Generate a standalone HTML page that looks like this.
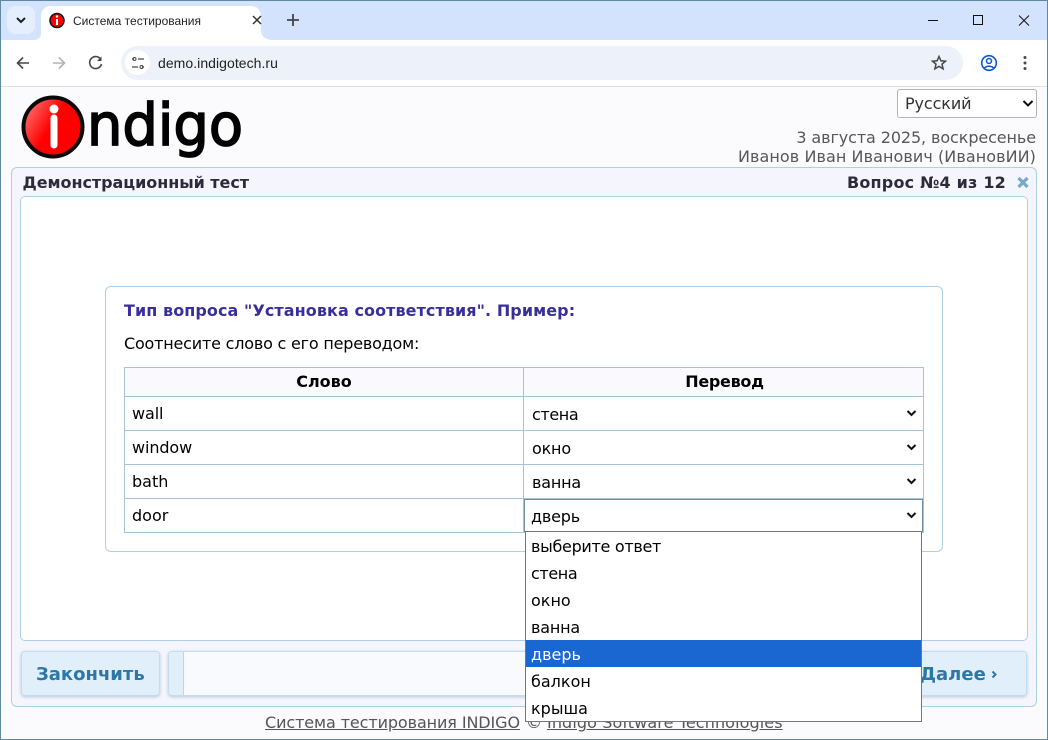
<!DOCTYPE html>
<html lang="ru"><head><meta charset="utf-8"><title>Система тестирования</title>
<style>
html,body{margin:0;padding:0;width:1048px;height:740px;overflow:hidden;background:#fbfbfe}
body{position:relative;font-family:"DejaVu Sans","Liberation Sans",sans-serif;font-size:16px;color:#000}
.a{position:absolute;white-space:nowrap}
.b{box-sizing:border-box}
.ch{font-family:"Liberation Sans",sans-serif}
svg{position:absolute;overflow:visible}
.cell{position:absolute;font-size:16px;line-height:20px;white-space:nowrap}
.opt{position:absolute;left:5px;font-size:16px;line-height:27px;height:27px}
</style></head><body>
<!-- browser chrome -->
<div class="a b" style="left:0;top:0;width:1048px;height:40px;background:#d3e3fd"></div>
<div class="a b" style="left:0;top:40px;width:1048px;height:47px;background:#fff;border-bottom:1px solid #e3e1de"></div>
<div class="a" style="left:7px;top:6px;width:28px;height:28px;background:#e5eefd;border-radius:8px"></div>
<svg style="left:0;top:0" width="1048" height="90" fill="none">
<path d="M17 18l4 4 4-4" stroke="#1f1f1f" stroke-width="2"/>
<path d="M33 40c6 0 8-3 8-8V16c0-6 4-10 10-10h200c6 0 10 4 10 10v14c0 6 4 10 12 10z" fill="#fff"/>
<circle cx="57" cy="20.500" r="7" fill="#f00" stroke="#111" stroke-width="1.500"/>
<path d="M57 19v6" stroke="#fff" stroke-width="2"/><circle cx="57" cy="16.500" r="1.200" fill="#fff"/>
<path d="M253 16l8 8M261 16l-8 8" stroke="#333" stroke-width="1.500"/>
<path d="M293 14v12M287 20h12" stroke="#444" stroke-width="1.800"/>
<path d="M928 20.500h10" stroke="#111" stroke-width="1"/>
<rect x="973.500" y="15.500" width="9" height="9" stroke="#111" stroke-width="1"/>
<path d="M1019 15.500l10 10M1029 15.500l-10 10" stroke="#111" stroke-width="1"/>
<path d="M29 63H18M23 57.500L17.500 63l5.500 5.500" stroke="#474747" stroke-width="1.600"/>
<path d="M53 63h11M59 57.500l5.500 5.500-5.500 5.500" stroke="#b3b3b3" stroke-width="1.600"/>
<path d="M100.500 59a6 6 0 1 0 1 5" stroke="#474747" stroke-width="1.600"/><path d="M101.500 56.500v4.500h-4.500z" fill="#474747"/>
</svg>
<div class="a b" style="left:121px;top:46px;width:842px;height:34px;border-radius:17px;background:#edf2fa"></div>
<div class="a" style="left:125px;top:50px;width:25px;height:25px;border-radius:50%;background:#fff"></div>
<svg style="left:0;top:0" width="1048" height="90" fill="none">
<path d="M132 59h2M138 59h6M132 67h6M142 67h2" stroke="#474747" stroke-width="1.300"/><circle cx="134.500" cy="59" r="1.500" stroke="#474747"/><circle cx="141.500" cy="67" r="1.500" stroke="#474747"/>
<path d="M939 56.500l1.900 4.300 4.600.4-3.500 3 1.100 4.600-4.100-2.400-4.100 2.400 1.100-4.600-3.500-3 4.600-.4z" stroke="#474747" stroke-width="1.500"/>
<circle cx="989" cy="63" r="7.300" stroke="#0b57d0" stroke-width="1.600"/><circle cx="989" cy="61" r="2.500" stroke="#0b57d0" stroke-width="1.500"/><path d="M984 68.500c2-3 8-3 10 0" stroke="#0b57d0" stroke-width="1.500"/>
<circle cx="1025" cy="57.500" r="1.500" fill="#474747"/><circle cx="1025" cy="63" r="1.500" fill="#474747"/><circle cx="1025" cy="68.500" r="1.500" fill="#474747"/>
</svg>
<div class="a ch" style="left:73px;top:14px;font-size:12px;line-height:15px;color:#1f1f1f">Система тестирования</div>
<div class="a ch" style="left:158px;top:55px;font-size:14px;line-height:16px;color:#1f1f1f;letter-spacing:.05px">demo.indigotech.ru</div>
<!-- logo -->
<svg style="left:0;top:0" width="260" height="170">
<defs><linearGradient id="g" x1="0" y1="0" x2="1" y2="0.600"><stop offset="0" stop-color="#ff8a8a"/><stop offset=".55" stop-color="#f00"/></linearGradient></defs>
<circle cx="53" cy="127" r="29.500" fill="url(#g)" stroke="#0a0a0a" stroke-width="4"/>
<path d="M54 118v27" stroke="#fff" stroke-width="7" stroke-linecap="round"/><circle cx="54" cy="109" r="4.500" fill="#fff"/>
<text x="87" y="145" font-family="DejaVu Sans,sans-serif" font-size="58" textLength="156" lengthAdjust="spacingAndGlyphs" stroke="#000" stroke-width="1.700">ndigo</text>
</svg>
<!-- language select -->
<div class="a b" style="left:897px;top:89px;width:140px;height:29px;background:#fff;border:1px solid #b4b4b4;border-radius:3px"></div>
<div class="a" style="left:905px;top:94px;font-size:16px;line-height:19px;color:#333;letter-spacing:-.1px">Русский</div>
<svg style="left:0;top:0" width="1048" height="130" fill="none"><path d="M1023.500 101l4.500 4.500 4.500-4.500" stroke="#111" stroke-width="2"/></svg>
<div class="a" style="right:12px;top:128px;font-size:16px;line-height:19px;color:#575757;letter-spacing:-.1px">3 августа 2025, воскресенье</div>
<div class="a" style="right:12px;top:147px;font-size:16px;line-height:19px;color:#575757;letter-spacing:.07px">Иванов Иван Иванович (ИвановИИ)</div>
<!-- panel -->
<div class="a b" style="left:11px;top:167px;width:1026px;height:540px;background:#f5f6fd;border:1px solid #abd0e8;border-radius:6px"></div>
<div class="a" style="left:22.500px;top:173px;font-size:16px;font-weight:bold;line-height:19px;color:#2e2a3a;letter-spacing:-.05px">Демонстрационный тест</div>
<div class="a" style="right:42px;top:173px;font-size:16px;font-weight:bold;line-height:19px;color:#2e2a3a;letter-spacing:.2px">Вопрос №4 из 12</div>
<svg style="left:0;top:0" width="1048" height="200" fill="none"><path d="M1018.500 178l9 9M1027.500 178l-9 9" stroke="#79a8c9" stroke-width="3.200"/></svg>
<div class="a b" style="left:20px;top:196px;width:1008px;height:445px;background:#fff;border:1px solid #abd0e8;border-radius:5px"></div>
<!-- question box -->
<div class="a b" style="left:105px;top:286px;width:838px;height:266px;background:#fff;border:1px solid #abd0e8;border-radius:6px"></div>
<div class="a" style="left:124px;top:301px;font-size:16px;font-weight:bold;line-height:20px;color:#3a2f9a;letter-spacing:.07px">Тип вопроса "Установка соответствия". Пример:</div>
<div class="a" style="left:124px;top:334px;font-size:16px;line-height:20px;letter-spacing:-.2px">Соотнесите слово с его переводом:</div>
<!-- table -->
<div class="a b" style="left:124px;top:367px;width:800px;height:166px;border:1px solid #a4c3d9;background:#fff"></div>
<div class="a" style="left:125px;top:368px;width:798px;height:28px;background:#faf9fe"></div>
<div class="a" style="left:124px;top:396px;width:800px;height:1px;background:#a4c3d9"></div>
<div class="a" style="left:124px;top:430px;width:800px;height:1px;background:#a4c3d9"></div>
<div class="a" style="left:124px;top:464px;width:800px;height:1px;background:#a4c3d9"></div>
<div class="a" style="left:124px;top:498px;width:800px;height:1px;background:#a4c3d9"></div>
<div class="a" style="left:523px;top:367px;width:1px;height:166px;background:#a4c3d9"></div>
<div class="cell" style="left:125px;width:398px;top:372px;text-align:center;font-weight:bold">Слово</div>
<div class="cell" style="left:525px;width:399px;top:372px;text-align:center;font-weight:bold;letter-spacing:-.3px">Перевод</div>
<div class="cell" style="left:132px;top:404px;letter-spacing:-.1px">wall</div>
<div class="cell" style="left:132px;top:438px;letter-spacing:-.1px">window</div>
<div class="cell" style="left:132px;top:472px">bath</div>
<div class="cell" style="left:132px;top:506px">door</div>
<div class="cell" style="left:532px;top:405px;letter-spacing:-.4px">стена</div>
<div class="cell" style="left:532px;top:439px;letter-spacing:-.2px">окно</div>
<div class="cell" style="left:532px;top:473px;letter-spacing:-.2px">ванна</div>
<div class="a b" style="left:524px;top:499px;width:399px;height:33px;border:1px solid #6f8f9f"></div>
<div class="cell" style="left:531px;top:507px;letter-spacing:-.2px">дверь</div>
<svg style="left:0;top:0" width="1048" height="530" fill="none"><path d="M907.500 411l4 4 4-4M907.500 445l4 4 4-4M907.500 479l4 4 4-4M907.500 513l4 4 4-4" stroke="#111" stroke-width="2"/></svg>
<!-- buttons -->
<div class="a b" style="left:21px;top:651px;width:139px;height:45px;background:#e1effa;border:1px solid #c3dcef;border-radius:4px;box-shadow:0 1px 3px rgba(90,130,170,.4)"></div>
<div class="a" style="left:36px;top:664px;font-size:18px;font-weight:bold;line-height:21px;color:#2b78a8">Закончить</div>
<div class="a b" style="left:168px;top:651px;width:859px;height:45px;background:#f9fafd;border:1px solid #c3dcef;border-radius:4px;box-shadow:0 1px 3px rgba(90,130,170,.4)"></div>
<div class="a" style="left:169px;top:652px;width:14px;height:43px;background:#e1effa;border-right:1px solid #b9d6ec;border-radius:3px 0 0 3px"></div>
<div class="a b" style="left:900px;top:652px;width:126px;height:43px;background:#e1effa;border-radius:0 3px 3px 0"></div>
<div class="a" style="left:920px;top:664px;font-size:18px;font-weight:bold;line-height:21px;color:#2b78a8">Далее</div>
<svg style="left:0;top:0" width="1048" height="700" fill="none"><path d="M992.500 671.500l3 3-3 3" stroke="#2b78a8" stroke-width="2"/></svg>
<!-- footer -->
<div class="a" style="left:265px;top:713px;font-size:16px;line-height:19px;color:#555;letter-spacing:-.1px"><u>Система тестирования INDIGO</u></div>
<div class="a" style="left:526px;top:713px;font-size:16px;line-height:19px;color:#555">©</div>
<div class="a" style="left:547px;top:713px;font-size:16px;line-height:19px;color:#555;letter-spacing:.1px"><u>Indigo Software Technologies</u></div>
<!-- dropdown -->
<div class="a b" style="left:525px;top:531px;width:397px;height:191px;background:#fff;border:1px solid #767676">
<div class="opt" style="top:1px;letter-spacing:-.3px">выберите ответ</div>
<div class="opt" style="top:28px;letter-spacing:-.4px">стена</div>
<div class="opt" style="top:55px">окно</div>
<div class="opt" style="top:82px;letter-spacing:-.2px">ванна</div>
<div class="a" style="left:0;top:108px;width:395px;height:27px;background:#1a67d2"></div>
<div class="opt" style="top:109px;color:#fff">дверь</div>
<div class="opt" style="top:136px">балкон</div>
<div class="opt" style="top:163px">крыша</div>
</div>
<!-- window edges -->
<div class="a" style="left:0;top:0;width:1px;height:740px;background:#5f8a9e"></div>
<div class="a" style="right:0;top:0;width:1px;height:740px;background:#5f8a9e"></div>
<div class="a" style="left:0;top:0;width:1048px;height:1px;background:#5f8a9e"></div>
<div class="a" style="left:0;bottom:0;width:1048px;height:1px;background:#5f8a9e"></div>
</body></html>
